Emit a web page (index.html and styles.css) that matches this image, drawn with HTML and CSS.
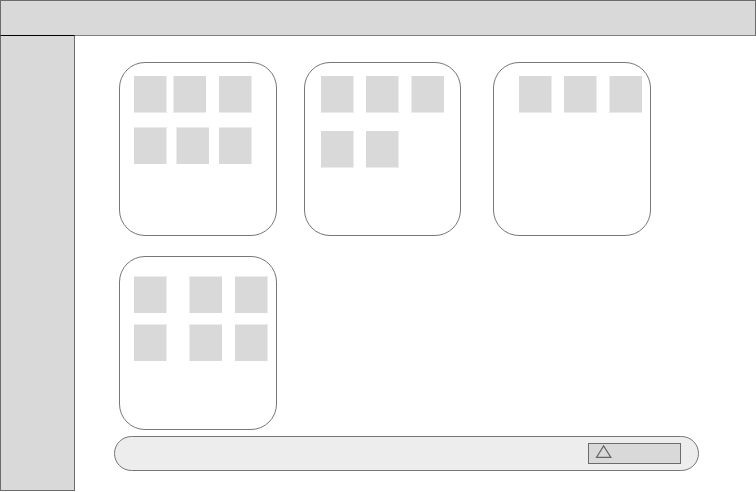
FILE: index.html
```html
<!DOCTYPE html>
<html lang="en">
<head>
    <meta charset="UTF-8">
    <meta name="viewport" content="width=device-width, initial-scale=1.0">
    <title>Dashboard wireframe</title>
    <link rel="stylesheet" href="styles.css">
</head>
<body>
    <header class="topbar"></header>
    <div class="layout">
        <aside class="sidebar"></aside>
        <main class="content">
            <div class="cards">
                <section class="card">
                    <div class="row row-tight">
                        <div class="tile"></div>
                        <div class="tile edge-left"></div>
                        <div class="tile"></div>
                    </div>
                    <div class="row row-middle">
                        <div class="tile edge-top"></div>
                        <div class="tile edge-top edge-left"></div>
                        <div class="tile edge-top"></div>
                    </div>
                </section>
                <section class="card card-center">
                    <div class="row">
                        <div class="tile"></div>
                        <div class="tile"></div>
                        <div class="tile edge-left"></div>
                    </div>
                    <div class="row">
                        <div class="tile"></div>
                        <div class="tile"></div>
                    </div>
                </section>
                <section class="card card-right">
                    <div class="row">
                        <div class="tile"></div>
                        <div class="tile"></div>
                        <div class="tile edge-left"></div>
                    </div>
                </section>
                <section class="card card-low">
                    <div class="row row-wide">
                        <div class="tile edge-top"></div>
                        <div class="tile edge-top edge-left"></div>
                        <div class="tile edge-top"></div>
                    </div>
                    <div class="row row-wide">
                        <div class="tile edge-top"></div>
                        <div class="tile edge-top edge-left"></div>
                        <div class="tile edge-top"></div>
                    </div>
                </section>
            </div>
            <footer class="dock">
                <button class="dock-button" type="button" aria-label="Open">
                    <svg width="16" height="14" viewBox="0 0 16 14" aria-hidden="true">
                        <path d="M7.6 0.9 L14.9 12.4 H0.5 Z" fill="none" stroke="#666" stroke-width="1.2"/>
                    </svg>
                </button>
            </footer>
        </main>
    </div>
</body>
</html>
```
FILE: styles.css
```css
* {
    box-sizing: border-box;
}
body {
    margin: 0;
    min-height: calc(100vh - 1px);
    display: flex;
    flex-direction: column;
    font-family: "Liberation Sans", Arial, sans-serif;
    background-color: #fff;
}
.topbar {
    height: 36px;
    background-color: #d9d9d9;
    border: 1px solid #6c6c6c;
    border-bottom-color: #808080;
}
.layout {
    flex: 1;
    display: flex;
}
/* the black top line sits over the header border */
.sidebar {
    width: 75px;
    flex-shrink: 0;
    margin-top: -1px;
    background-color: #d9d9d9;
    border: 1px solid #6c6c6c;
    border-top-color: #000;
}
.content {
    flex: 1;
    padding: 26px 57px 20px 39px;
}
.cards {
    display: grid;
    grid-template-columns: 1fr 27px 1fr 32px 1fr;
    row-gap: 20px;
    padding: 0 48px 0 5px;
}
.card {
    grid-column: 1;
    min-height: 174px;
    padding: 13px 0 13px 14px;
    display: flex;
    flex-direction: column;
    gap: 14px;
    border: 1px solid #777;
    border-radius: 26px;
}
.card-center {
    grid-column: 3;
    padding-left: 16px;
    gap: 18px;
}
.card-right {
    grid-column: 5;
    padding-left: 25px;
}
.card-low {
    padding-top: 19px;
    gap: 11px;
}

/* tiles */
.row {
    display: grid;
    grid-template-columns: 45px 45px 33px;
}
.row-tight {
    grid-template-columns: 39px 46px 33px;
}
.row-middle {
    grid-template-columns: 42px 43px 33px;
}
.row-wide {
    grid-template-columns: 55px 46px 33px;
}
.tile {
    width: 33px;
    height: 37px;
    background-color: #d9d9d9;
    border: 0 solid #ebebeb;
    border-right-width: 1px;
    border-bottom-width: 1px;
}
.edge-left {
    border-right-width: 0;
    border-left-width: 1px;
}
.edge-top {
    border-bottom-width: 0;
    border-top-width: 1px;
}

/* bottom bar */
.dock {
    margin-top: 6px;
    padding: 6px 17px;
    display: flex;
    justify-content: flex-end;
    background-color: #ededed;
    border: 1px solid #777;
    border-radius: 18px;
}
.dock-button {
    width: 93px;
    height: 21px;
    padding: 1px 7px;
    display: flex;
    align-items: flex-start;
    background-color: #d9d9d9;
    border: 1px solid #6c6c6c;
    cursor: pointer;
}
.dock-button svg {
    flex-shrink: 0;
    overflow: visible;
}
```
